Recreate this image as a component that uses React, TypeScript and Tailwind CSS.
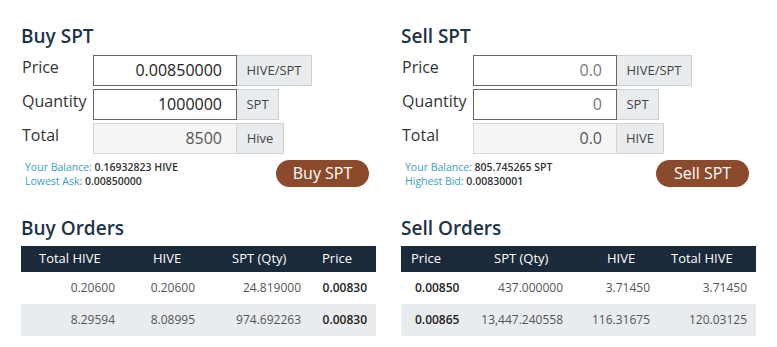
import React from "react";

type Field = {
  label: string;
  value: string;
  unit: string;
  unitW: string;
  readOnly?: boolean;
  muted?: boolean;
};

function OrderForm({
  title,
  fields,
  balanceLabel,
  balance,
  bestLabel,
  best,
  action
}: {
  title: string;
  fields: Field[];
  balanceLabel: string;
  balance: string;
  bestLabel: string;
  best: string;
  action: string;
}) {
  return (
    <div className="w-[355px]">
      <h2 className="text-[19px] leading-[28px] font-semibold text-[#1e3348]">{title}</h2>
      <div className="mt-[5px] flex flex-col gap-[3px]">
        {fields.map((f) => (
          <div key={f.label} className="flex items-start">
            <div className="w-[72px] pl-[1px] text-[16px] leading-6 text-[#333]">{f.label}</div>
            <div
              className={
                f.readOnly
                  ? "h-[31px] w-[144px] border border-[#d4d4d4] bg-[#f5f5f5] pr-[14px] text-right text-[16px] leading-[29px] text-[#555]"
                  : "h-[31px] w-[144px] border border-[#666] bg-white pr-[14px] text-right text-[16px] leading-[29px] " +
                    (f.muted ? "text-[#777]" : "text-[#222]")
              }>
              {f.value}
            </div>
            <div
              className={
                "h-[31px] border border-l-0 border-[#d0d0d0] bg-[#e9ecef] text-center text-[13px] leading-[29px] text-[#444] " +
                f.unitW
              }>
              {f.unit}
            </div>
          </div>
        ))}
      </div>
      <div className="mt-[6px] flex items-start justify-between pr-[7px]">
        <div className="pl-[4px] text-[10.5px] leading-[14px]">
          <div>
            <span className="text-[#3aa0c0]">{balanceLabel} </span>
            <span className="font-semibold text-[#333]">{balance}</span>
          </div>
          <div>
            <span className="text-[#3aa0c0]">{bestLabel} </span>
            <span className="font-semibold text-[#333]">{best}</span>
          </div>
        </div>
        <button className="h-[27px] w-[93px] rounded-full bg-[#8b4a2b] text-[16px] leading-[27px] text-white">
          {action}
        </button>
      </div>
    </div>
  );
}

type Col = { head: string; w: string; hp: string; cp: string; bold?: boolean; left?: boolean };

function OrderTable({ title, cols, rows }: { title: string; cols: Col[]; rows: string[][] }) {
  return (
    <div className="w-[355px]">
      <h2 className="text-[19px] leading-[28px] font-semibold text-[#1e3348]">{title}</h2>
      <div className="mt-[4px]">
        <div className="flex h-[26px] items-center bg-[#1b2a3b] text-[13px] font-medium text-white">
          {cols.map((c) => (
            <div key={c.head} className={c.w + " " + c.hp}>
              {c.head}
            </div>
          ))}
        </div>
        {rows.map((r, i) => (
          <div
            key={i}
            className={"flex h-[32px] items-center text-[12px] " + (i % 2 ? "bg-[#e9ecef]" : "bg-white")}>
            {r.map((v, j) => (
              <div
                key={j}
                className={
                  cols[j].w +
                  " " +
                  cols[j].cp +
                  (cols[j].left ? " text-left" : " text-right") +
                  (cols[j].bold ? " font-semibold text-[#222]" : " text-[#555]")
                }>
                {v}
              </div>
            ))}
          </div>
        ))}
      </div>
    </div>
  );
}

export default function App() {
  return (
    <div
      className="h-[347px] w-[777px] bg-white pt-[22px] pl-[21px]"
      style={{ fontFamily: '"Open Sans", sans-serif' }}>
      <div className="flex gap-[25px]">
        <OrderForm
          title="Buy SPT"
          fields={[
            { label: "Price", value: "0.00850000", unit: "HIVE/SPT", unitW: "w-[75px]" },
            { label: "Quantity", value: "1000000", unit: "SPT", unitW: "w-[42px]" },
            { label: "Total", value: "8500", unit: "Hive", unitW: "w-[47px]", readOnly: true }
          ]}
          balanceLabel="Your Balance:"
          balance="0.16932823 HIVE"
          bestLabel="Lowest Ask:"
          best="0.00850000"
          action="Buy SPT"
        />
        <OrderForm
          title="Sell SPT"
          fields={[
            { label: "Price", value: "0.0", unit: "HIVE/SPT", unitW: "w-[75px]", muted: true },
            { label: "Quantity", value: "0", unit: "SPT", unitW: "w-[42px]", muted: true },
            { label: "Total", value: "0.0", unit: "HIVE", unitW: "w-[47px]", readOnly: true }
          ]}
          balanceLabel="Your Balance:"
          balance="805.745265 SPT"
          bestLabel="Highest Bid:"
          best="0.00830001"
          action="Sell SPT"
        />
      </div>
      <div className="mt-[26px] flex gap-[25px]">
        <OrderTable
          title="Buy Orders"
          cols={[
            { head: "Total HIVE", w: "w-[118px]", hp: "pl-[18px]", cp: "pr-[24px]" },
            { head: "HIVE", w: "w-[76px]", hp: "pl-[14px]", cp: "pr-[20px]" },
            { head: "SPT (Qty)", w: "w-[96px]", hp: "pl-[17px]", cp: "pr-[10px]" },
            { head: "Price", w: "w-[65px]", hp: "pl-[11px]", cp: "pr-[9px]", bold: true }
          ]}
          rows={[
            ["0.20600", "0.20600", "24.819000", "0.00830"],
            ["8.29594", "8.08995", "974.692263", "0.00830"]
          ]}
        />
        <OrderTable
          title="Sell Orders"
          cols={[
            { head: "Price", w: "w-[76px]", hp: "pl-[10px]", cp: "pl-[14px]", bold: true, left: true },
            { head: "SPT (Qty)", w: "w-[96px]", hp: "pl-[17px]", cp: "pr-[10px]" },
            { head: "HIVE", w: "w-[82px]", hp: "pl-[34px]", cp: "pr-[5px]" },
            { head: "Total HIVE", w: "w-[101px]", hp: "pl-[16px]", cp: "pr-[9px]" }
          ]}
          rows={[
            ["0.00850", "437.000000", "3.71450", "3.71450"],
            ["0.00865", "13,447.240558", "116.31675", "120.03125"]
          ]}
        />
      </div>
    </div>
  );
}
